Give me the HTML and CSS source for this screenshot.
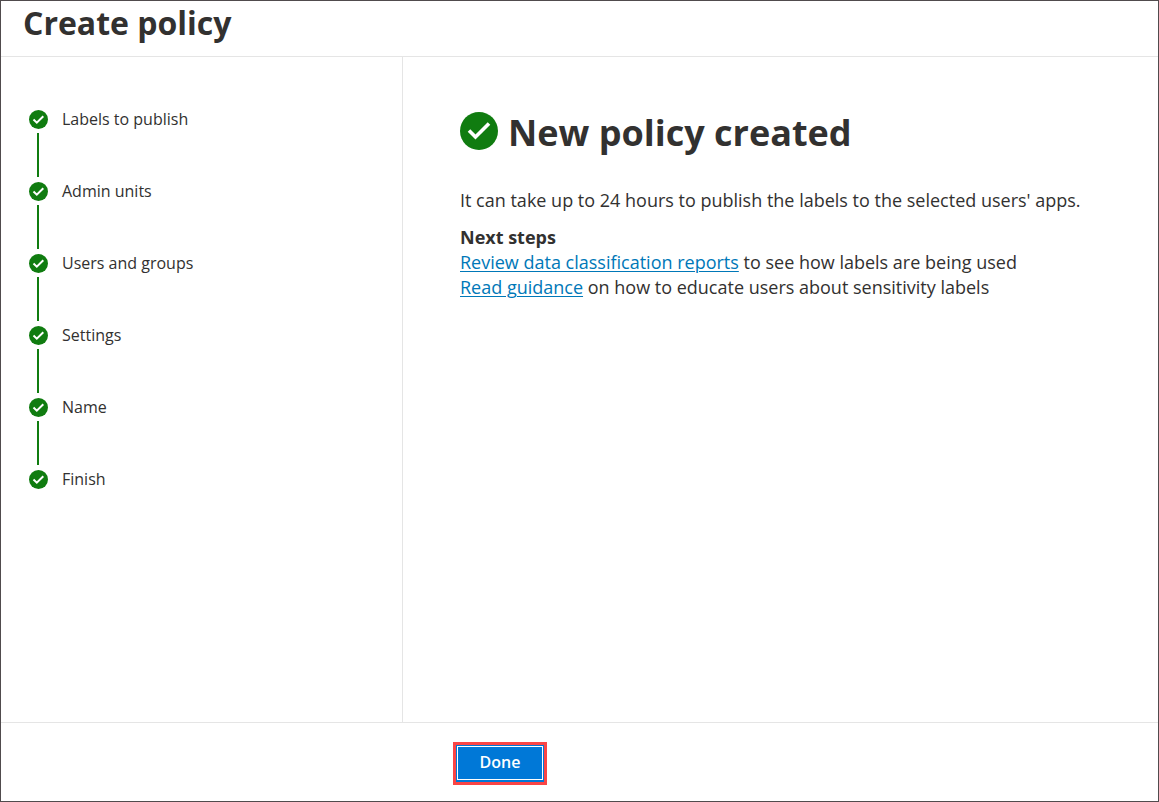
FILE: index.html
```html
<!DOCTYPE html>
<html lang="en">
<head>
<meta charset="utf-8">
<meta name="viewport" content="width=device-width, initial-scale=1">
<title>Create policy</title>
<link rel="stylesheet" href="styles.css">
</head>
<body>
<svg class="sprite" aria-hidden="true">
  <symbol id="check" viewBox="0 0 38 38">
    <circle cx="19" cy="19" r="19" fill="#107c10"/>
    <path d="M9 18.500 L15.500 25 L29 11.500" fill="none" stroke="#fff" stroke-width="3.600"/>
  </symbol>
  <symbol id="check-small" viewBox="0 0 19 19">
    <circle cx="9.500" cy="9.500" r="9.500" fill="#107c10"/>
    <path d="M4.500 9.500 L7.800 12.700 L14.300 6.200" fill="none" stroke="#fff" stroke-width="2"/>
  </symbol>
</svg>
<div class="wizard">
  <header class="header"><h1 class="title">Create policy</h1></header>
  <div class="body">
    <nav class="sidebar" aria-label="Steps">
      <ol class="steps">
        <li class="step"><svg class="step-icon"><use href="#check-small"/></svg><span class="step-label">Labels to publish</span></li>
        <li class="step"><svg class="step-icon"><use href="#check-small"/></svg><span class="step-label">Admin units</span></li>
        <li class="step"><svg class="step-icon"><use href="#check-small"/></svg><span class="step-label">Users and groups</span></li>
        <li class="step"><svg class="step-icon"><use href="#check-small"/></svg><span class="step-label">Settings</span></li>
        <li class="step"><svg class="step-icon"><use href="#check-small"/></svg><span class="step-label">Name</span></li>
        <li class="step"><svg class="step-icon"><use href="#check-small"/></svg><span class="step-label">Finish</span></li>
      </ol>
    </nav>
    <main class="content">
      <div class="result">
        <svg class="result-icon"><use href="#check"/></svg>
        <h2 class="result-title">New policy created</h2>
      </div>
      <p class="message">It can take up to 24 hours to publish the labels to the selected users' apps.</p>
      <h3 class="next-title">Next steps</h3>
      <p class="next"><a class="link" href="#reports">Review data classification reports</a> to see how labels are being used</p>
      <p class="next"><a class="link" href="#guidance">Read guidance</a> on how to educate users about sensitivity labels</p>
    </main>
  </div>
  <footer class="footer">
    <div class="highlight"><button class="done" type="button">Done</button></div>
  </footer>
</div>
</body>
</html>
```

FILE: styles.css
```css
* { box-sizing: border-box; }

body {
  margin: 0;
  background: #fff;
  color: #323130;
  font-family: "Open Sans", "Noto Sans", sans-serif;
  font-size: 18px;
  line-height: 25px;
}

h1, h2, h3, p, ol { margin: 0; padding: 0; }

.sprite { position: absolute; width: 0; height: 0; }

.wizard {
  display: flex;
  flex-direction: column;
  min-height: 100vh;
  border: 1px solid #504b4d;
}

.header {
  padding: 0 22px 11px;
  border-bottom: 1px solid #e5e5e5;
}

.title {
  font-size: 32px;
  line-height: 44px;
  font-weight: 700;
}

.body { display: flex; flex: 1; }

.sidebar {
  flex: 0 0 402px;
  padding: 50px 28px;
  border-right: 1px solid #e5e5e5;
}

.steps { list-style: none; }

.step {
  display: grid;
  grid-template-columns: 19px 1fr;
  grid-template-rows: 24px 48px;
  column-gap: 14px;
  align-items: center;
  font-size: 16px;
  line-height: 24px;
}

.step-icon { width: 19px; height: 19px; }

.step:not(:last-child)::after {
  content: "";
  grid-row: 2;
  margin-left: 8px;
  width: 2px;
  height: 44px;
  background: #107c10;
}

.content { flex: 1; padding: 49px 57px; }

.result { display: flex; align-items: flex-start; gap: 10px; }

.result-icon { flex: none; width: 38px; height: 38px; margin-top: 6px; }

.result-title { padding-top: 2px; font-size: 36px; line-height: 50px; font-weight: 700; }

.message { margin-top: 30px; }

.next-title { margin-top: 12px; font-size: 18px; font-weight: 700; }

.link { color: #0078b8; text-decoration-thickness: 1px; text-underline-offset: 2px; }

.footer {
  display: flex;
  padding: 19px 452px 16px;
  border-top: 1px solid #e5e5e5;
}

.highlight {
  padding: 1px 1px 2px;
  border: 3px solid #fa4545;
  background: #0078d7;
}

.done {
  display: block;
  width: 86px;
  height: 34px;
  margin: 0;
  padding: 0 0 2px;
  border: 1px solid #fff;
  background: #0078d7;
  color: #fff;
  font: 600 16px/24px "Open Sans", "Noto Sans", sans-serif;
}
```
